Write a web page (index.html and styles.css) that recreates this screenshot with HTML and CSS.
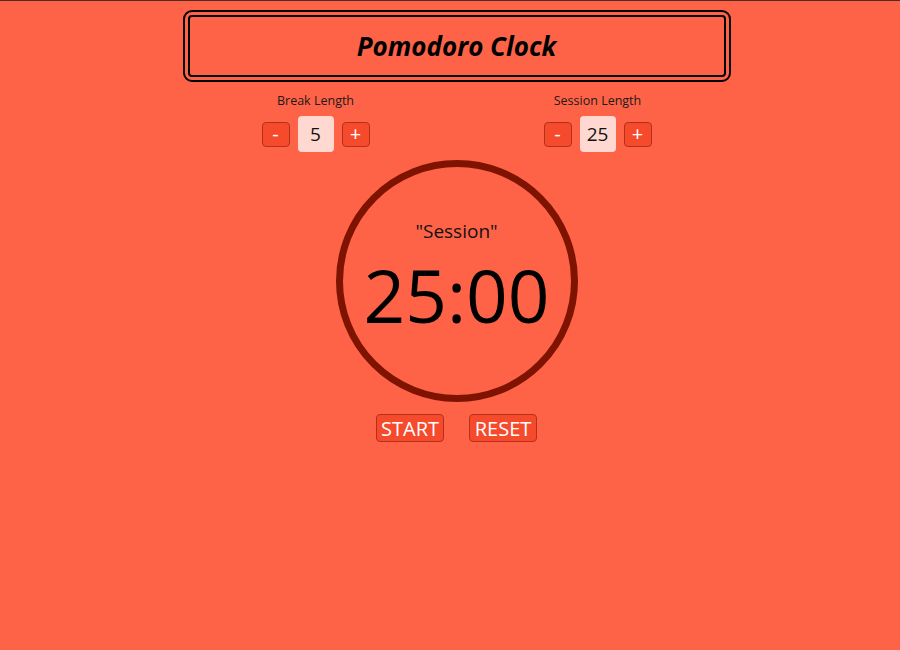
FILE: index.html
```html
<!DOCTYPE html>
<html lang="en">
<head>
<meta charset="utf-8">
<title>Pomodoro Clock</title>
<link rel="stylesheet" href="styles.css">
</head>
<body>
<div class="page">
  <div class="app">
    <header class="title-box">
      <h1 class="title">Pomodoro Clock</h1>
    </header>
    <section class="controls">
      <div class="group">
        <div class="label">Break Length</div>
        <div class="stepper">
          <button class="step">-</button>
          <div class="value">5</div>
          <button class="step">+</button>
        </div>
      </div>
      <div class="group">
        <div class="label">Session Length</div>
        <div class="stepper">
          <button class="step">-</button>
          <div class="value">25</div>
          <button class="step">+</button>
        </div>
      </div>
    </section>
    <section class="timer">
      <div class="timer-label">"Session"</div>
      <div class="timer-time">25:00</div>
    </section>
    <section class="actions">
      <button class="action">START</button>
      <button class="action">RESET</button>
    </section>
  </div>
</div>
</body>
</html>
```

FILE: styles.css
```css
html, body {
  margin: 0;
  padding: 0;
}
body {
  background: #ff6347;
  border-top: 1px solid #4a2c2a;
  min-height: 649px;
  font-family: "Open Sans", "Noto Sans", sans-serif;
  color: #111;
}
.page {
  padding-left: 13px;
}
.app {
  width: 548px;
  margin: 9px auto 0;
  display: flex;
  flex-direction: column;
  align-items: center;
}
.title-box {
  box-sizing: border-box;
  width: 548px;
  height: 72px;
  border: 7px double #000;
  border-radius: 9px;
  display: flex;
  align-items: center;
  justify-content: center;
}
.title {
  margin: 0;
  font-size: 26px;
  font-style: italic;
  font-weight: 700;
  color: #000;
}
.controls {
  display: flex;
  justify-content: center;
  gap: 174px;
  margin-top: 9px;
}
.group {
  display: flex;
  flex-direction: column;
  align-items: center;
}
.label {
  padding-top: 1px;
  font-size: 12.5px;
  line-height: 18px;
  color: #1a1a1a;
}
.stepper {
  display: flex;
  align-items: center;
  gap: 8px;
  margin-top: 6px;
}
.step {
  box-sizing: border-box;
  width: 28px;
  height: 25px;
  padding: 0;
  background: #f64a2d;
  border: 1px solid #b3301a;
  border-radius: 4px;
  color: #fff;
  font-family: inherit;
  font-size: 20px;
  line-height: 20px;
}
.value {
  width: 36px;
  height: 36px;
  border-radius: 4px;
  background: #ffd9d1;
  display: flex;
  align-items: center;
  justify-content: center;
  font-size: 19px;
  color: #111;
}
.timer {
  box-sizing: border-box;
  width: 242px;
  height: 242px;
  margin-top: 8px;
  border: 7px solid #7d1300;
  border-radius: 50%;
  display: flex;
  flex-direction: column;
  align-items: center;
}
.timer-label {
  margin-top: 52px;
  font-size: 19px;
  line-height: 24px;
  color: #111;
}
.timer-time {
  margin-top: 12px;
  font-size: 73px;
  line-height: 80px;
  color: #000;
}
.actions {
  display: flex;
  justify-content: center;
  gap: 25px;
  margin-top: 12px;
}
.action {
  box-sizing: border-box;
  width: 68px;
  height: 28px;
  padding: 2px 0 0;
  background: #f64a2d;
  border: 1px solid #b3301a;
  border-radius: 4px;
  color: #fff;
  font-family: inherit;
  font-size: 20px;
  line-height: 24px;
}
```
